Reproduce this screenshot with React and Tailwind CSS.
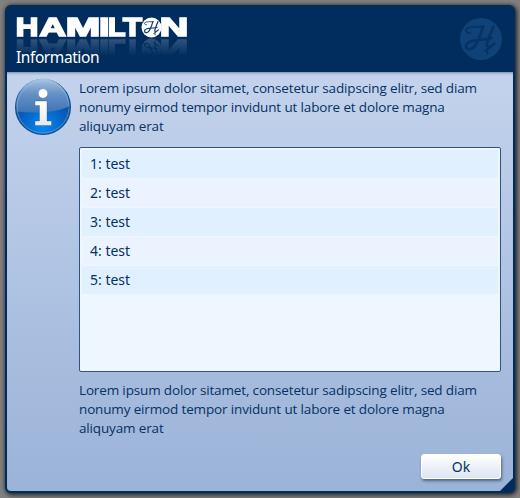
const body = 'Lorem ipsum dolor sitamet, consetetur sadipscing elitr, sed diam|nonumy eirmod tempor invidunt ut labore et dolore magna|aliquyam erat'.split('|');

function Flourish() {
  return (
    <g fill="none" stroke="currentColor" strokeLinecap="round" strokeLinejoin="round">
      <path strokeWidth="1.800" d="M10 15C7 15.500 5 13 6.500 11C9 8 17 9.500 24 8.500" />
      <path strokeWidth="2.500" d="M23 9C21 15 18 25 14 29C11 32 6 32 6 28.500C6 24 12 22.500 18 22C24 21.500 30 21 31.500 20" />
      <path strokeWidth="2.600" d="M33.500 8.500C31.500 13 28.500 21 27 26C26 30 29.500 30 34.500 25.500" />
      <path strokeWidth="1.800" d="M31 29C29 32 26 32 24.500 33M27 31L27.500 36" />
    </g>
  );
}

function Wordmark() {
  return (
    <svg className="block h-[20px] w-[180px] overflow-visible text-white [-webkit-box-reflect:below_0px_linear-gradient(to_top,rgba(255,255,255,0.2),transparent_90%)]" viewBox="0 0 180 20">
      <g fill="currentColor" stroke="currentColor" strokeWidth="1.6" fontFamily="'Liberation Sans', sans-serif" fontWeight="700" fontSize="25">
        <text x="-0.300" y="18.300" textLength="22.600" lengthAdjust="spacingAndGlyphs">H</text>
        <text x="23.500" y="18.300" textLength="26.500" lengthAdjust="spacingAndGlyphs">A</text>
        <text x="49.800" y="18.300" textLength="34.500" lengthAdjust="spacingAndGlyphs">M</text>
        <text x="83" y="18.300" textLength="10.500" lengthAdjust="spacingAndGlyphs">I</text>
        <text x="92" y="18.300" textLength="17.500" lengthAdjust="spacingAndGlyphs">L</text>
        <text x="107" y="18.300" textLength="19" lengthAdjust="spacingAndGlyphs">T</text>
        <text x="143.800" y="18.300" textLength="28.500" lengthAdjust="spacingAndGlyphs">N</text>
      </g>
      <circle cx="135.500" cy="9.500" r="10" fill="currentColor" />
      <g className="text-[#17406f]" transform="translate(125.600 -0.600) scale(.49)"><Flourish /></g>
    </svg>
  );
}

function InfoIcon() {
  return (
    <svg className="-mt-[2px] block h-[60px] w-[60px]" viewBox="0 0 60 60">
      <defs>
        <radialGradient id="orb" cx=".5" cy=".85" r=".75">
          <stop offset="0" stopColor="#0789f5" />
          <stop offset=".5" stopColor="#0463c4" />
          <stop offset="1" stopColor="#0b4388" />
        </radialGradient>
        <linearGradient id="gloss" x1="0" y1="0" x2="0" y2="1">
          <stop offset="0" stopColor="#a9c4e2" />
          <stop offset=".45" stopColor="#6591c6" />
          <stop offset="1" stopColor="#3d75b7" />
        </linearGradient>
        <linearGradient id="glyph" x1="0" y1="0" x2="0" y2="1">
          <stop offset="0" stopColor="#fff" />
          <stop offset="1" stopColor="#e8e8e8" />
        </linearGradient>
      </defs>
      <circle cx="30" cy="30" r="27.300" fill="url(#orb)" stroke="#16518f" strokeWidth="1.500" />
      <path d="M4 34.500A26.500 26.500 0 1 1 56.200 29C47 35 23 37 4 34.500Z" fill="url(#gloss)" />
      <circle cx="30" cy="30" r="26" fill="none" stroke="#a5cdee" strokeOpacity=".4" />
      <circle cx="30" cy="16.500" r="4.700" fill="#fff" stroke="#285f9d" strokeOpacity=".35" strokeWidth=".7" />
      <path d="M22 24H34V44H38.500V48.500H22V44H26.500V28.500H22Z" fill="url(#glyph)" stroke="#174b86" strokeOpacity=".45" strokeWidth=".7" />
    </svg>
  );
}

function Message() {
  return (
    <p className="font-['Open_Sans','Noto_Sans',sans-serif] text-[13.5px] leading-[19px] tracking-[-0.15px] whitespace-nowrap text-[#063262]">
      {body.map((line) => <span className="block" key={line}>{line}</span>)}
    </p>
  );
}

export default function App() {
  return (
    <div className="h-[498px] w-[520px] overflow-hidden bg-[#808080] pt-[5px] pl-[5px] font-['Noto_Sans',sans-serif] text-[#063262]">
      <main className="relative flex h-[488px] w-[510px] flex-col overflow-hidden rounded-[6px] bg-[#002d5e] px-[2px] pb-[2px] shadow-[1px_1px_4px_1px_#222]">
        <header className="flex h-[67px] shrink-0 justify-between pt-[13px] pr-[11px] pl-[9px]">
          <div className="text-white">
            <Wordmark />
            <h1 className="relative mt-[8px] text-[15.5px] leading-[22px] font-normal tracking-[-0.42px]">Information</h1>
          </div>
          <svg className="block h-[42px] w-[42px] text-[#073263]" viewBox="0 0 42 42">
            <circle cx="21" cy="21" r="21" fill="#0e4278" />
            <Flourish />
          </svg>
        </header>
        <section className="flex min-h-0 flex-1 flex-col rounded-b-[4px] bg-linear-to-b from-[#c4d3ed] to-[#9ab3d7] pt-[7px] pr-[12px] pb-[12px] pl-[6px] shadow-[inset_0_3px_3px_-2px_#7186a6]">
          <div className="flex h-[60px] gap-[6px]">
            <InfoIcon />
            <Message />
          </div>
          <div className="mt-[8px] ml-[66px] flex h-[225px] w-[422px] flex-col gap-px rounded-[2px] border border-[#31557f] bg-[#eef6ff] p-[2px]">
            {[1, 2, 3, 4, 5].map((n) => (
              <div key={n} className="flex h-[28px] shrink-0 items-center bg-[#eaf3ff] pb-[2px] pl-[8px] text-[14px] odd:bg-[#e1f0ff]">{n}: test</div>
            ))}
          </div>
          <div className="mt-[9px] ml-[66px]"><Message /></div>
          <button className="mt-auto flex h-[25px] w-[80px] items-center justify-center self-end rounded-[3px] border border-white bg-linear-to-b from-white to-[#dce5f0] text-[14px] shadow-[1px_2px_3px_#4d6384]">Ok</button>
        </section>
        <svg className="absolute right-[2px] bottom-[2px] h-[13px] w-[13px]" viewBox="0 0 13 13"><path d="M13 0V13H0Z" fill="#002d5e" /></svg>
      </main>
    </div>
  );
}
